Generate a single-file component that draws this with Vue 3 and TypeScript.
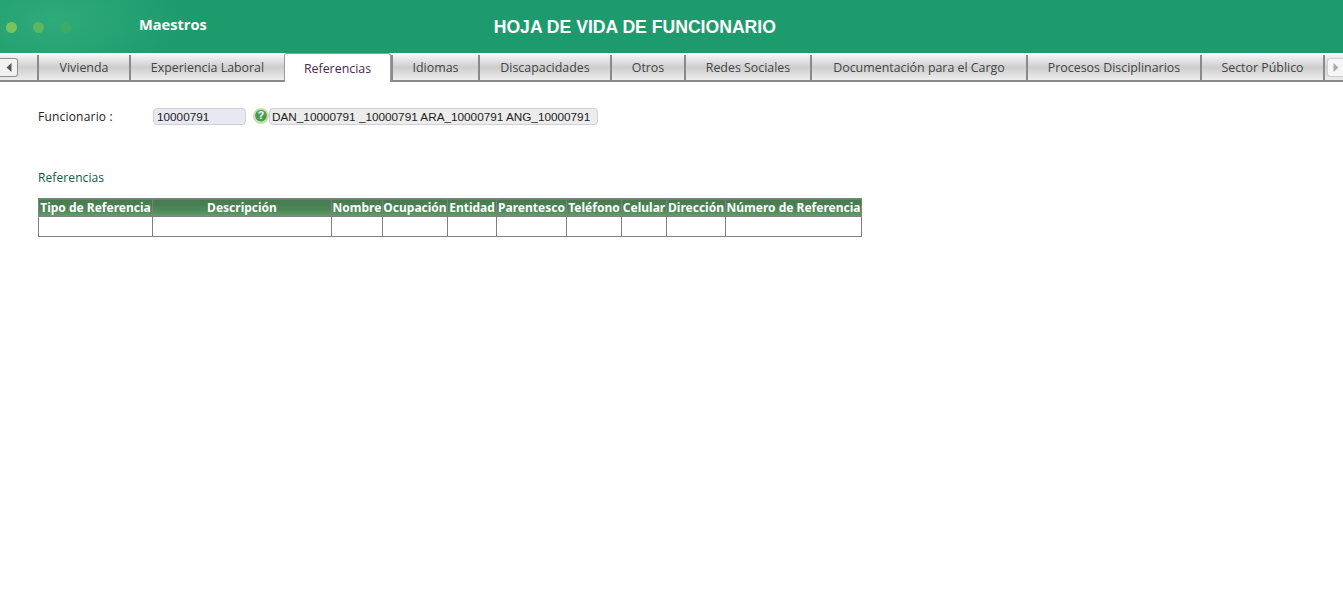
<script setup lang="ts">
interface Tab { label: string; width: number; active?: boolean }
const tabs: Tab[] = [
  { label: 'Vivienda', width: 92 },
  { label: 'Experiencia Laboral', width: 155 },
  { label: 'Referencias', width: 107, active: true },
  { label: 'Idiomas', width: 87 },
  { label: 'Discapacidades', width: 132 },
  { label: 'Otros', width: 74 },
  { label: 'Redes Sociales', width: 126 },
  { label: 'Documentación para el Cargo', width: 216 },
  { label: 'Procesos Disciplinarios', width: 174 },
  { label: 'Sector Público', width: 125 },
]
const cols = [
  { label: 'Tipo de Referencia', width: 114 },
  { label: 'Descripción', width: 179 },
  { label: 'Nombre', width: 51 },
  { label: 'Ocupación', width: 65 },
  { label: 'Entidad', width: 49 },
  { label: 'Parentesco', width: 70 },
  { label: 'Teléfono', width: 55 },
  { label: 'Celular', width: 45 },
  { label: 'Dirección', width: 59 },
  { label: 'Número de Referencia', width: 136 },
]
</script>

<template>
  <div class="page">
    <header class="top">
      <div class="dots">
        <span class="dot d1"></span>
        <span class="dot d2"></span>
        <span class="dot d3"></span>
      </div>
      <span class="brand">Maestros</span>
      <h1 class="title">HOJA DE VIDA DE FUNCIONARIO</h1>
    </header>

    <nav class="tabs">
      <div class="scroll-cell left">
        <button class="scroll-btn" type="button" aria-label="Anterior">
          <svg width="6" height="9" viewBox="0 0 6 9"><path d="M5.5 0v9L0.5 4.5z" fill="#555" /></svg>
        </button>
      </div>
      <div
        v-for="t in tabs"
        :key="t.label"
        class="tab"
        :class="{ active: t.active }"
        :style="{ width: t.width + 'px' }"
      >{{ t.label }}</div>
      <div class="scroll-cell right">
        <button class="scroll-btn" type="button" aria-label="Siguiente">
          <svg width="6" height="9" viewBox="0 0 6 9"><path d="M0.5 0v9L5.5 4.5z" fill="#aaa" /></svg>
        </button>
      </div>
    </nav>

    <main class="content">
      <div class="field-row">
        <label class="field-label">Funcionario :</label>
        <div class="input code">10000791</div>
        <span class="help">
          <svg width="16" height="16" viewBox="0 0 16 16">
            <circle cx="8" cy="8" r="8" fill="#c4e2b8" />
            <circle cx="8" cy="7.6" r="5.8" fill="#4d9a52" />
            <text x="8" y="11.4" text-anchor="middle" class="help-mark">?</text>
          </svg>
        </span>
        <div class="input name">DAN_10000791 _10000791 ARA_10000791 ANG_10000791</div>
      </div>

      <h2 class="section">Referencias</h2>

      <table class="grid">
        <colgroup>
          <col v-for="c in cols" :key="c.label" :style="{ width: c.width + 'px' }" />
        </colgroup>
        <thead>
          <tr><th v-for="c in cols" :key="c.label">{{ c.label }}</th></tr>
        </thead>
        <tbody>
          <tr><td v-for="c in cols" :key="c.label"></td></tr>
        </tbody>
      </table>
    </main>
  </div>
</template>

<style>
html, body { margin: 0; background: #fff; }
</style>

<style scoped>
.page {
  width: 1343px;
  height: 592px;
  overflow: hidden;
  background: #fff;
  font-family: "Open Sans", "Liberation Sans", sans-serif;
}
.top {
  height: 53px;
  display: flex;
  align-items: center;
  position: relative;
  background:
    radial-gradient(ellipse 130px 70px at 55px 20px, rgba(70, 190, 140, 0.45), rgba(70, 190, 140, 0) 100%),
    #1d9b6c;
}
.dots {
  width: 139px;
  padding-left: 6px;
  box-sizing: border-box;
  display: flex;
  gap: 16px;
  margin-top: 1px;
}
.dot { width: 11px; height: 11px; border-radius: 50%; }
.d1 { background: #78c45a; }
.d2 { background: #5cb85f; }
.d3 { background: #3cab68; }
.brand {
  color: #fff;
  font-size: 14.6px;
  font-weight: 700;
  font-family: "Open Sans", sans-serif;
  margin-top: -6px;
}
.title {
  margin: 2px 0 0 287px;
  color: #fff;
  font-family: "Liberation Sans", Arial, sans-serif;
  font-size: 17.6px;
  font-weight: 700;
  line-height: 53px;
}
.tabs {
  margin-top: 2px;
  height: 27px;
  display: flex;
  box-sizing: border-box;
  border-bottom: 2px solid #8a8a8a;
  background: linear-gradient(#f2f2f2, #cfcfcf 50%, #ececec);
}
.scroll-cell {
  height: 25px;
  display: flex;
  align-items: center;
  flex: none;
}
.scroll-cell.left { width: 37px; }
.scroll-cell.right { width: 18px; justify-content: flex-end; }
.scroll-btn {
  width: 18px;
  height: 19px;
  padding: 0;
  margin: 0;
  box-sizing: border-box;
  display: flex;
  align-items: center;
  justify-content: center;
  border: 1px solid #8f8f8f;
  border-left: none;
  border-radius: 0 3px 3px 0;
  background: #f1f1f1;
}
.scroll-cell.right .scroll-btn {
  width: 16px;
  border: 1px solid #cfcfcf;
  border-right: none;
  border-radius: 3px 0 0 3px;
  background: #f6f6f6;
}
.tab {
  flex: none;
  box-sizing: border-box;
  height: 25px;
  line-height: 26px;
  text-align: center;
  font-size: 12.4px;
  color: #444;
  border-left: 2px solid #8a8a8a;
  background: linear-gradient(#f4f4f4, #cdcdcd 50%, #eeeeee);
}
.tab:nth-last-child(2) { border-right: 2px solid #8a8a8a; }
.tab.active {
  height: 29px;
  margin-top: -2px;
  line-height: 30px;
  background: #fff;
  color: #4a2850;
  border: 1px solid #9a9a9a;
  border-bottom: none;
  border-radius: 3px 3px 0 0;
  position: relative;
}
.content { padding: 25px 0 0 38px; }
.field-row {
  display: flex;
  align-items: center;
  height: 18px;
}
.field-label {
  width: 115px;
  flex: none;
  font-size: 12px;
  color: #222;
  letter-spacing: 0.2px;
}
.input {
  box-sizing: border-box;
  height: 17px;
  line-height: 16px;
  border: 1px solid #cfcfd4;
  border-radius: 4px;
  background: #e8e8f2;
  color: #222;
  font-family: "Liberation Sans", Arial, sans-serif;
  font-size: 11.75px;
  white-space: nowrap;
}
.code { width: 93px; padding-left: 3px; }
.help {
  width: 16px;
  height: 16px;
  margin-left: 7px;
  display: block;
  flex: none;
}
.help svg { display: block; }
.help-mark {
  font-family: "Liberation Sans", Arial, sans-serif;
  font-size: 10.5px;
  font-weight: 700;
  fill: #fff;
}
.name {
  width: 329px;
  padding-left: 2px;
  background: #ececec;
}
.section {
  margin: 44px 0 0;
  font-size: 12px;
  line-height: 18px;
  font-weight: 400;
  color: #0f5a48;
  letter-spacing: 0.1px;
}
.grid {
  margin-top: 11px;
  border-collapse: collapse;
  table-layout: fixed;
  width: 823px;
  font-family: "Noto Sans", "DejaVu Sans", sans-serif;
}
.grid th, .grid td {
  border: 1px solid #808080;
  padding: 0;
}
.grid th {
  height: 16px;
  padding-top: 1px;
  font-size: 12px;
  line-height: 16px;
  font-weight: 700;
  color: #fff;
  white-space: nowrap;
  overflow: hidden;
  background: linear-gradient(#467a50, #4c8656 60%, #62a06c);
}
.grid td { height: 19px; background: #fff; }
</style>
